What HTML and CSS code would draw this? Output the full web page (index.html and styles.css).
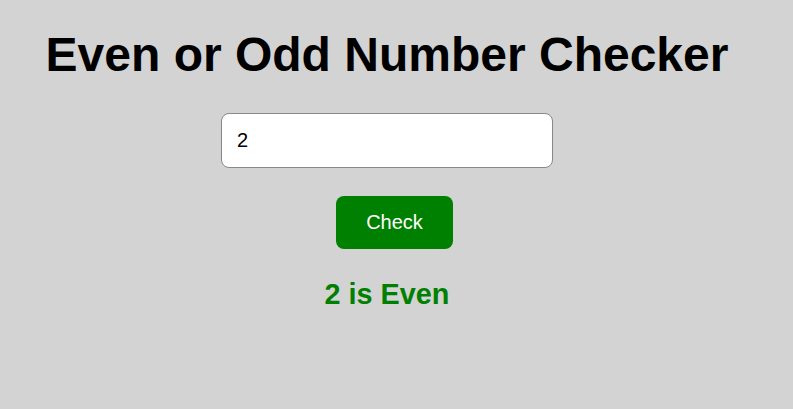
FILE: index.html
```html
<!DOCTYPE html>
<html>
<head>
<meta charset="utf-8">
<link rel="stylesheet" href="styles.css">
</head>
<body>
<main class="app">
  <h1 class="title">Even or Odd Number Checker</h1>
  <input class="num-input" type="text" value="2">
  <button class="check-btn">Check</button>
  <p class="result">2 is Even</p>
</main>
</body>
</html>
```

FILE: styles.css
```css
html, body {
  margin: 0;
  padding: 0;
  background: #d3d3d3;
  font-family: "Liberation Sans", Arial, sans-serif;
}
.app {
  display: flex;
  flex-direction: column;
  align-items: center;
  padding: 25px 19px 0 0;
}
.title {
  margin: 0;
  font-size: 48px;
  font-weight: bold;
  color: #000;
  line-height: 60px;
}
.num-input {
  margin-top: 28px;
  width: 332px;
  height: 55px;
  box-sizing: border-box;
  border: 1px solid #888;
  border-radius: 8px;
  background: #fff;
  padding: 0 15px;
  font-family: "Liberation Sans", Arial, sans-serif;
  font-size: 20px;
  color: #000;
  outline: none;
}
.check-btn {
  margin-top: 28px;
  margin-left: 15px;
  width: 117px;
  height: 53px;
  border: none;
  border-radius: 8px;
  background: #008000;
  color: #fff;
  font-family: "Liberation Sans", Arial, sans-serif;
  font-size: 20px;
}
.result {
  margin: 30px 0 0;
  font-size: 28.8px;
  font-weight: bold;
  color: #008000;
  line-height: 30px;
}
```
